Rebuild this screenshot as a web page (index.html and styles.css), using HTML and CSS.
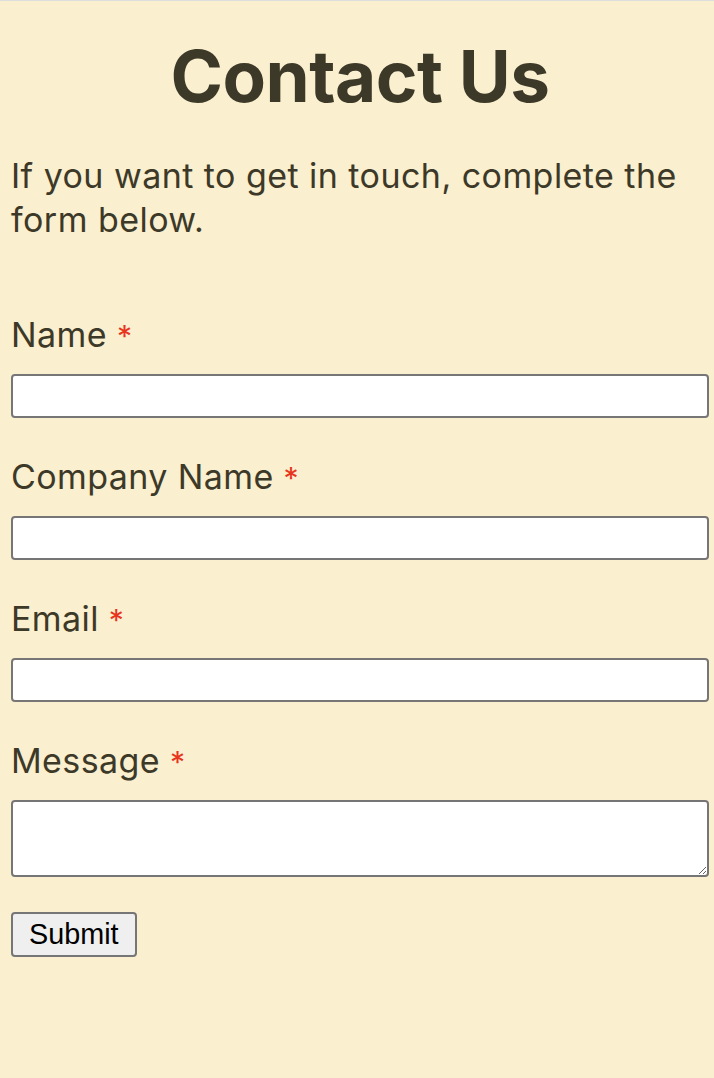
FILE: index.html
```html
<!DOCTYPE html>
<html lang="en">
<head>
<meta charset="utf-8">
<title>Contact Us</title>
<link rel="stylesheet" href="styles.css">
</head>
<body>
<main class="page">
  <h1 class="title">Contact Us</h1>
  <p class="intro">If you want to get in touch, complete the form below.</p>
  <form class="form">
    <div class="field">
      <label class="label" for="name">Name <span class="req">*</span></label>
      <input class="input" id="name" type="text">
    </div>
    <div class="field">
      <label class="label" for="company">Company Name <span class="req">*</span></label>
      <input class="input" id="company" type="text">
    </div>
    <div class="field">
      <label class="label" for="email">Email <span class="req">*</span></label>
      <input class="input" id="email" type="email">
    </div>
    <div class="field">
      <label class="label" for="message">Message <span class="req">*</span></label>
      <textarea class="textarea" id="message"></textarea>
    </div>
    <button class="submit" type="submit">Submit</button>
  </form>
</main>
</body>
</html>
```
FILE: styles.css
```css
html, body {
  margin: 0;
  padding: 0;
  background: #faefce;
  height: 100%;
}
body {
  border-top: 1px solid #dedede;
  font-family: Inter, "Noto Sans", sans-serif;
  color: #3d3929;
  box-sizing: border-box;
}
.page {
  padding: 0 5px 0 11px;
}
.title {
  margin: 0;
  padding-top: 33px;
  font-size: 71px;
  font-weight: 700;
  line-height: 85px;
  text-align: center;
  letter-spacing: -0.5px;
}
.intro {
  margin: 35px 0 0;
  font-size: 34px;
  line-height: 44px;
  letter-spacing: 0.45px;
}
.form {
  margin-top: 72px;
}
.field {
  display: flex;
  flex-direction: column;
  margin-bottom: 38px;
}
.label {
  display: block;
  height: 41px;
  font-size: 34px;
  line-height: 41px;
  letter-spacing: 0.4px;
  margin-bottom: 19px;
}
.req {
  color: #e8341c;
  font-size: 30px;
  line-height: 0;
}
.input, .textarea {
  box-sizing: border-box;
  width: 100%;
  margin: 0;
  background: #fff;
  border: 2px solid #767676;
  border-radius: 4px;
  font-family: Inter, sans-serif;
  font-size: 16px;
}
.input {
  height: 44px;
}
.textarea {
  height: 77px;
  resize: vertical;
}
.submit {
  margin: -3px 0 0;
  box-sizing: border-box;
  height: 45px;
  padding: 0 16px;
  background: #efefef;
  border: 2px solid #767676;
  border-radius: 4px;
  font-family: "Liberation Sans", Arial, sans-serif;
  font-size: 28.8px;
  color: #000;
}
```
